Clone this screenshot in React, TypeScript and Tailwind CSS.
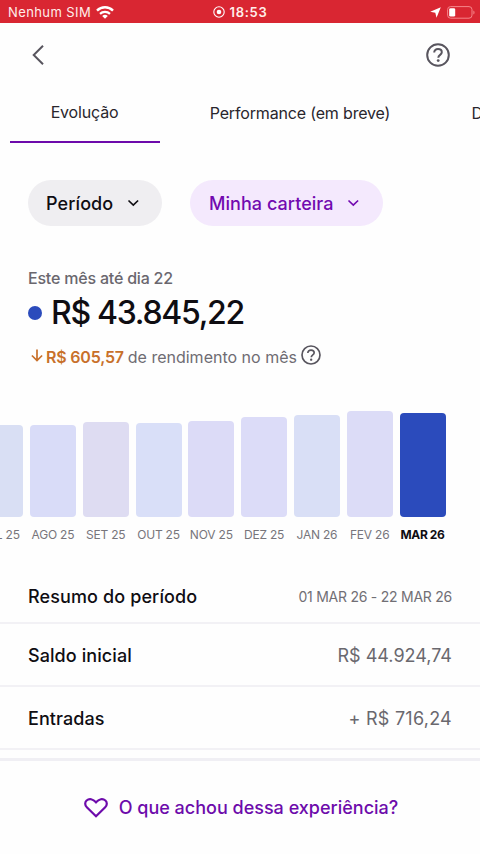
import React from "react";

const Help = ({ className }: { className: string }) => (
  <svg viewBox="0 0 24 24" fill="none" stroke="#58555e" className={className}>
    <circle cx="12" cy="12" r="10.8" strokeWidth="2" />
    <path
      d="M8.2 9.6c0-2.1 1.6-3.5 3.8-3.5s3.8 1.3 3.8 3.2c0 2.6-3.5 2.5-3.5 5.4"
      strokeWidth="2"
    />
    <circle cx="12.2" cy="17.6" r="1.4" fill="#58555e" stroke="none" />
  </svg>
);

const Chevron = () => (
  <svg
    viewBox="0 0 12 8"
    fill="none"
    stroke="currentColor"
    strokeWidth="1.7"
    className="h-2 w-3"
  >
    <path d="M1.5 1.5 6.3 6l4.8-4.5" />
  </svg>
);

const months = [
  { label: "JUL 25", height: "h-[92px]", color: "bg-[#d9dff4]" },
  { label: "AGO 25", height: "h-[92px]", color: "bg-[#d9dcf8]" },
  { label: "SET 25", height: "h-[95px]", color: "bg-[#dedcf2]" },
  { label: "OUT 25", height: "h-[94px]", color: "bg-[#d9dff8]" },
  { label: "NOV 25", height: "h-[96px]", color: "bg-[#dcdbf7]" },
  { label: "DEZ 25", height: "h-[100px]", color: "bg-[#dcdcf8]" },
  { label: "JAN 26", height: "h-[102px]", color: "bg-[#d9dff6]" },
  { label: "FEV 26", height: "h-[106px]", color: "bg-[#dcdcf7]" },
  { label: "MAR 26", height: "h-[104px]", color: "bg-[#2b4bbc]", active: true },
];

const rows = [
  { label: "Saldo inicial", value: "R$ 44.924,74", spacing: "tracking-normal" },
  { label: "Entradas", value: "+ R$ 716,24", spacing: "tracking-[0.25px]" },
];

const StatusBar = () => (
  <div className="grid h-[23px] grid-cols-[1fr_auto_1fr] items-center bg-[#d92632] pl-2 pr-[5px] pt-px text-[#ffeeea]">
    <div className="flex items-center gap-[5px]">
      <span className="pt-px text-[13px] tracking-[0.4px]">Nenhum SIM</span>
      <svg viewBox="0 0 18 13" fill="none" stroke="#fff" className="h-[13px] w-[18px]">
        <path d="M1 4.6a11.4 11.4 0 0 1 16 0" strokeWidth="2.4" />
        <path d="M4 7.9a7.2 7.2 0 0 1 10 0" strokeWidth="2.2" />
        <path d="M9 12.8 6.2 10a4.1 4.1 0 0 1 5.6 0z" fill="#fff" stroke="none" />
      </svg>
    </div>
    <div className="flex items-center gap-[5px] pr-[3px]">
      <svg viewBox="0 0 12 12" fill="none" stroke="#fff" className="h-3 w-3">
        <circle cx="6" cy="6" r="5.2" strokeWidth="1.1" />
        <circle cx="6" cy="6" r="2.3" fill="#fff" stroke="none" />
      </svg>
      <span className="pt-px text-[13px] font-semibold tracking-[0.7px]">18:53</span>
    </div>
    <div className="flex items-center justify-end gap-[6px]">
      <svg viewBox="0 0 11 11" fill="#fff" className="h-[11px] w-[11px]">
        <path d="M10.8.2 6.5 10.8 5.3 5.8.2 4.8z" />
      </svg>
      <svg viewBox="0 0 28 13" fill="none" className="h-[13px] w-7">
        <rect x=".6" y=".6" width="24.4" height="11.6" rx="3" stroke="#f5868a" />
        <rect x="2.2" y="2.2" width="6" height="8.4" rx="1.4" fill="#fff" />
        <path d="M26.4 4.5c1.5.6 1.5 3.4 0 4z" fill="#f5868a" />
      </svg>
    </div>
  </div>
);

const App = () => {
  return (
    <div className="flex h-[854px] w-[480px] flex-col overflow-hidden bg-[#fefefe] font-['Inter',sans-serif] text-[#0f0d12]">
      <StatusBar />

      <header className="flex h-[65px] items-center justify-between pb-px pl-8 pr-[30px]">
        <svg
          viewBox="0 0 12 20"
          fill="none"
          stroke="#58555e"
          strokeWidth="2"
          className="h-5 w-3"
        >
          <path d="M11 .7 1.7 10l9.3 9.3" />
        </svg>
        <Help className="h-6 w-6" />
      </header>

      <nav className="flex h-[54.5px] whitespace-nowrap pl-[9.5px] text-[16px] tracking-[-0.17px] text-[#29262d]">
        <div className="flex w-[150px] shrink-0 items-center justify-center border-b-2 border-[#6d0bab] pb-[5px]">
          <span>Evolução</span>
        </div>
        <div className="flex w-[281px] shrink-0 items-center justify-center pb-[5px]">
          <span>Performance (em breve)</span>
        </div>
        <div className="flex shrink-0 items-center pb-[5px] pl-[31px]">
          <span>Dividendos</span>
        </div>
      </nav>

      <div className="mt-[37.5px] flex gap-7 px-7 text-[18px] font-medium">
        <button className="flex h-[46px] w-[134px] items-center gap-[14px] rounded-full bg-[#efeef1] pl-[18px]">
          <span className="tracking-[0.1px]">Período</span>
          <Chevron />
        </button>
        <button className="flex h-[46px] w-[193px] items-center gap-[13px] rounded-full bg-[#f4e9fd] pl-[19px] text-[#7209b0]">
          <span className="tracking-[0.05px]">Minha carteira</span>
          <Chevron />
        </button>
      </div>

      <section className="px-7 pt-[40px]">
        <p className="text-[16px] font-medium leading-6 tracking-[-0.2px] text-[#6a676e]">
          Este mês até dia 22
        </p>
        <div className="flex h-[46px] items-center gap-[9px]">
          <span className="h-[14px] w-[14px] rounded-full bg-[#2b4bbc]" />
          <h1 className="text-[32px] font-medium leading-none tracking-[-1.3px]">
            R$ 43.845,22
          </h1>
        </div>
        <div className="flex h-[42px] items-center whitespace-nowrap pl-[3px] text-[16px]">
          <svg
            viewBox="0 0 12 13"
            fill="none"
            stroke="#c8702a"
            strokeWidth="1.7"
            className="mb-[3px] mr-[3px] h-[13px] w-3"
          >
            <path d="M6 .5v11M.9 6.5 6 11.6l5.1-5.1" />
          </svg>
          <span className="font-semibold tracking-[-0.2px] text-[#c8702a]">
            R$ 605,57
          </span>
          <span className="ml-1 text-[#6f6c73]">de rendimento no mês</span>
          <Help className="mb-[4px] ml-1 h-5 w-5" />
        </div>
      </section>

      <section className="mt-[32px] flex h-[133px] items-end justify-end gap-[6.8px] pr-[34.5px]">
        {months.map((m) => (
          <div key={m.label} className="flex w-[46px] shrink-0 flex-col items-center">
            <div className={`w-full rounded-[4px] ${m.height} ${m.color}`} />
            <span
              className={`mt-[10px] whitespace-nowrap text-[12px] leading-4 ${
                m.active
                  ? "font-bold tracking-[-0.4px]"
                  : "tracking-[-0.2px] text-[#77757b]"
              }`}
            >
              {m.label}
            </span>
          </div>
        ))}
      </section>

      <section className="mt-[27px] text-[18px]">
        <div className="flex h-[54px] items-center justify-between border-b-2 border-[#f2f1f5] px-7 pt-px">
          <h2 className="font-medium tracking-[0.12px]">Resumo do período</h2>
          <span className="text-[14px] tracking-[-0.25px] text-[#716f75]">
            01 MAR 26 - 22 MAR 26
          </span>
        </div>
        {rows.map((row) => (
          <div
            key={row.label}
            className="flex h-[63px] items-center justify-between border-b-2 border-[#f2f1f5] px-7 pt-px"
          >
            <span className="font-medium tracking-[0.08px]">{row.label}</span>
            <span className={`text-[#6a686e] ${row.spacing}`}>{row.value}</span>
          </div>
        ))}
      </section>

      <footer className="mt-2 flex flex-1 items-center justify-center gap-[11px] border-t-[3px] border-[#f0eff4] pl-[2px] text-[#6d0bab]">
        <svg
          viewBox="0 0 24 20"
          fill="none"
          stroke="currentColor"
          strokeWidth="2.2"
          className="h-5 w-6"
        >
          <path d="M12 18.2 2.8 9.3C.7 7.2.7 4.3 2.6 2.5 5.2.2 9 .9 12 4.3c3-3.4 6.8-4.1 9.4-1.8 1.9 1.8 1.9 4.7-.2 6.8z" />
        </svg>
        <span className="text-[18px] font-medium">O que achou dessa experiência?</span>
      </footer>
    </div>
  );
};

export default App;
